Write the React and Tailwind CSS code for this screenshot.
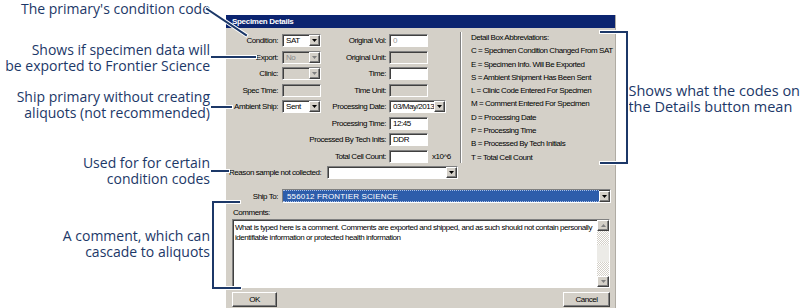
import React from "react";

const NAVY = "#1c3868";
const WIN =
  "font-['Liberation_Sans',Arial,sans-serif] text-[8px] leading-[11px] tracking-[-0.45px] text-black";

const sunken =
  "border border-t-[#808080] border-l-[#808080] border-r-white border-b-white shadow-[inset_1px_1px_0_#404040]";
const raised =
  "border border-t-white border-l-white border-r-[#404040] border-b-[#404040] shadow-[inset_-1px_-1px_0_#808080]";

function Arrow({ dim }) {
  return (
    <svg width="5" height="3" viewBox="0 0 5 3">
      <path d="M0 0h5L2.5 3z" fill={dim ? "#808080" : "#000"} />
    </svg>
  );
}

function DropBtn({ dim }) {
  return (
    <div className={`ml-auto w-[11px] h-[11px] shrink-0 bg-[#d4d0c8] flex items-center justify-center ${raised}`}>
      <Arrow dim={dim} />
    </div>
  );
}

function Input({ w = "w-[39px]", value, dim, muted }) {
  return (
    <div className={`${w} h-[13px] flex items-center pl-[3px] ${dim ? "bg-[#d4d0c8]" : "bg-white"} ${sunken}`}>
      <span className={muted ? "text-[#9a9a9a]" : ""}>{value}</span>
    </div>
  );
}

function Select({ w = "w-[39px]", value, dim }) {
  return (
    <div className={`${w} h-[13px] flex items-center pl-[3px] ${dim ? "bg-[#d4d0c8]" : "bg-white"} ${sunken}`}>
      <span className={dim ? "text-[#8a8a8a]" : ""}>{value}</span>
      <DropBtn dim={dim} />
    </div>
  );
}

function Row({ label, field, rlabel, rfield, extra }) {
  return (
    <div className="flex items-center h-[13px]">
      <div className="w-[56px] pr-[4px] text-right whitespace-nowrap">{label}</div>
      <div className="w-[39px]">{field}</div>
      <div className="w-[68px] pr-[3px] flex justify-end whitespace-nowrap">{rlabel}</div>
      {rfield}
      {extra}
    </div>
  );
}

const ABBR = [
  "Detail Box Abbreviations:",
  "C = Specimen Condition Changed From SAT",
  "E = Specimen Info. Will Be Exported",
  "S = Ambient Shipment Has Been Sent",
  "L = Clinic Code Entered For Specimen",
  "M = Comment Entered For Specimen",
  "D = Processing Date",
  "P = Processing Time",
  "B = Processed By Tech Initials",
  "T = Total Cell Count",
];

function Dialog() {
  return (
    <div className={`w-[392px] mt-[15px] h-[293px] flex flex-col bg-[#d4d0c8] border-r border-[#b0aca4] ${WIN}`}>
      <div className="h-[13px] bg-[#0b2470] flex items-center pl-[6px] text-white font-bold tracking-[-0.3px]">
        Specimen Details
      </div>

      <div className="flex">
        <div className="w-[234px] flex flex-col gap-[3.5px] pt-[6px]">
          <Row label="Condition:" field={<Select value="SAT" />} rlabel="Original Vol:" rfield={<Input value="0" muted />} />
          <Row label="Export:" field={<Select value="No" dim />} rlabel="Original Unit:" rfield={<Input dim />} />
          <Row label="Clinic:" field={<Select dim />} rlabel="Time:" rfield={<Input />} />
          <Row label="Spec Time:" field={<Input dim />} rlabel="Time Unit:" rfield={<Input dim />} />
          <Row
            label="Ambient Ship:"
            field={<Select value="Sent" />}
            rlabel="Processing Date:"
            rfield={<Select w="w-[57px]" value="03/May/2013" />}
          />
          <Row rlabel="Processing Time:" rfield={<Input value="12:45" />} />
          <Row rlabel="Processed By Tech Inits:" rfield={<Input value="DDR" />} />
          <Row
            rlabel="Total Cell Count:"
            rfield={<Input />}
            extra={<span className="ml-[4px]">x10^6</span>}
          />
          <div className="flex items-center h-[13px] pl-[3px] gap-[2px]">
            <span className="whitespace-nowrap w-[96px]">Reason sample not collected:</span>
            <Select w="w-[131px]" />
          </div>
        </div>

        <div className="w-[2px] mt-[4px] h-[131px] border-l border-[#808080] bg-white" />

        <div className="flex flex-col pl-[9px] pt-[3px] leading-[13.3px] whitespace-nowrap">
          {ABBR.map((t) => (
            <div key={t}>{t}</div>
          ))}
        </div>
      </div>

      <div className="flex items-center h-[14px] mt-[10px]">
        <div className="w-[56px] pr-[4px] text-right">Ship To:</div>
        <div className={`w-[329px] h-[14px] flex items-center bg-white ${sunken}`}>
          <div className="flex-1 h-[12px] bg-[#2d5dab] border-y border-dotted border-[#a8bfe6] flex items-center pl-[4px] text-white tracking-[0.15px]">
            556012 FRONTIER SCIENCE
          </div>
          <DropBtn />
        </div>
      </div>

      <div className="pl-[7px] mt-[3px] h-[12px] flex items-center">Comments:</div>

      <div className={`ml-[6px] w-[378px] h-[69px] mt-[1px] flex bg-white ${sunken}`}>
        <div className="flex-1 pl-[2px] pt-[3px] leading-[10px]">
          What is typed here is a comment. Comments are exported and shipped, and as such should not contain personally
          identifiable information or protected health information
        </div>
        <div className="w-[12px] flex flex-col bg-[#ecebe7]">
          <div className={`h-[11px] bg-[#d4d0c8] flex items-center justify-center ${raised}`}>
            <svg width="5" height="3" viewBox="0 0 5 3">
              <path d="M2.5 0L5 3H0z" fill="#808080" />
            </svg>
          </div>
          <div className="h-[14px] bg-[repeating-conic-gradient(#d4d0c8_0_25%,#ffffff_0_50%)] bg-[length:2px_2px]" />
          <div className="flex-1" />
          <div className="h-[14px] bg-[repeating-conic-gradient(#d4d0c8_0_25%,#ffffff_0_50%)] bg-[length:2px_2px]" />
          <div className={`h-[11px] bg-[#d4d0c8] flex items-center justify-center ${raised}`}>
            <Arrow dim />
          </div>
        </div>
      </div>

      <div className="flex justify-between ml-[6px] w-[378px] mt-[4px]">
        <div className={`w-[45px] h-[15px] flex items-center justify-center bg-[#d4d0c8] ${raised}`}>OK</div>
        <div className={`w-[47px] h-[15px] flex items-center justify-center bg-[#d4d0c8] ${raised}`}>Cancel</div>
      </div>
    </div>
  );
}

export default function App() {
  return (
    <div className="relative w-[800px] h-[308px] overflow-hidden bg-white flex font-['Open_Sans','Noto_Sans',sans-serif]">
      <div
        className="w-[226px] shrink-0 flex flex-col items-end pr-[16px] pt-[1px] text-right text-[14px] leading-[16px] whitespace-nowrap"
        style={{ color: NAVY }}
      >
        <div>The primary's condition code</div>
        <div className="mt-[25px]">
          Shows if specimen data will
          <br />
          be exported to Frontier Science
        </div>
        <div className="mt-[15px]">
          Ship primary without creating
          <br />
          aliquots (not recommended)
        </div>
        <div className="mt-[34px]">
          Used for for certain
          <br />
          condition codes
        </div>
        <div className="mt-[41px]">
          A comment, which can
          <br />
          cascade to aliquots
        </div>
      </div>

      <Dialog />

      <div
        className="pl-[12px] pt-[83px] text-[14.5px] leading-[16px] whitespace-nowrap"
        style={{ color: NAVY }}
      >
        Shows what the codes on
        <br />
        the Details button mean
      </div>

      <svg className="absolute inset-0 pointer-events-none" width="800" height="308" fill="none" strokeLinecap="square">
        <g stroke="#ffffff" strokeWidth="4">
          <path d="M207 9L246 35" />
          <path d="M212 57H255" />
          <path d="M212 107H231" />
          <path d="M212 171H228" />
          <path d="M239 202H213V288H240" />
          <path d="M601 32H627V163H601" />
        </g>
        <g stroke={NAVY} strokeWidth="2">
          <path d="M207 9L246 35" />
          <path d="M212 57H255" />
          <path d="M212 107H231" />
          <path d="M212 171H228" />
          <path d="M239 202H213V288H240" />
          <path d="M601 32H627V163H601" />
        </g>
      </svg>
    </div>
  );
}
